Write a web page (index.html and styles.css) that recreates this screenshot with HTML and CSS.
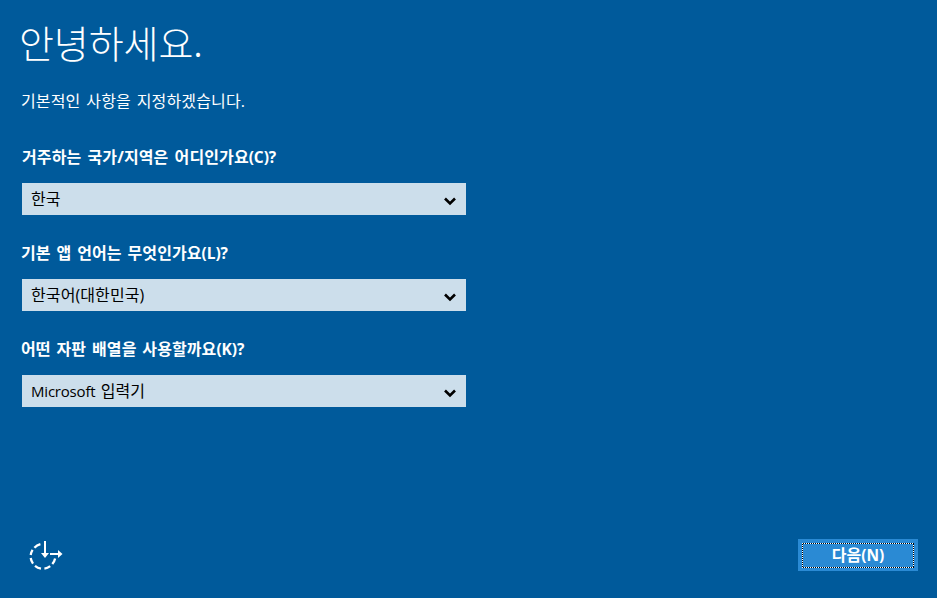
FILE: index.html
```html
<!DOCTYPE html>
<html lang="ko">
<head>
<meta charset="utf-8">
<title>안녕하세요.</title>
<link rel="stylesheet" href="styles.css">
</head>
<body>
<main class="setup">
  <h1 class="title">안녕하세요.</h1>
  <p class="intro">기본적인 사항을 지정하겠습니다.</p>
  <form class="fields">
    <div class="field">
      <label class="label country">거주하는 국가/지역은 어디인가요<span class="key">(C)?</span></label>
      <div class="select"><span class="value">한국</span><svg class="chevron" viewBox="0 0 12 9"><path d="M1 1.5 6 6.5 11 1.5"/></svg></div>
    </div>
    <div class="field">
      <label class="label language">기본 앱 언어는 무엇인가요<span class="key">(L)?</span></label>
      <div class="select"><span class="value">한국어(대한민국)</span><svg class="chevron" viewBox="0 0 12 9"><path d="M1 1.5 6 6.5 11 1.5"/></svg></div>
    </div>
    <div class="field">
      <label class="label keyboard">어떤 자판 배열을 사용할까요<span class="key">(K)?</span></label>
      <div class="select"><span class="value"><span class="latin">Microsoft</span> 입력기</span><svg class="chevron" viewBox="0 0 12 9"><path d="M1 1.5 6 6.5 11 1.5"/></svg></div>
    </div>
  </form>
  <footer class="footer">
    <svg class="ease" viewBox="0 0 34 30">
      <path class="ring" d="M11.4 3.1A12.6 12.6 0 0 0 5.4 6.8M3.6 8.9A12.6 12.6 0 0 0 1.7 14M1.7 17A12.6 12.6 0 0 0 4 22.6M6 24.8A12.6 12.6 0 0 0 12 27.6M15.4 27.7A12.6 12.6 0 0 0 21.2 25.2M23.3 23A12.6 12.6 0 0 0 26.1 17.4"/>
      <path class="arrow" d="M16 0V13M21 13H30"/>
      <path class="head" d="M12 12H20L16 17ZM29 9L33.5 13L29 17Z"/>
    </svg>
    <button class="next" type="button"><span class="focus">다음<span class="key">(N)</span></span></button>
  </footer>
</main>
</body>
</html>
```

FILE: styles.css
```css
* { box-sizing: border-box; }
body {
  margin: 0;
  background: #005a9b;
  color: #fff;
  font-family: "Open Sans", "Noto Sans CJK KR", sans-serif;
  font-size: 16px;
}
.setup {
  display: flex;
  flex-direction: column;
  height: 598px;
  padding: 16px 19px 27px 22px;
}
.title {
  margin: 0 0 0 -3px;
  height: 52px;
  line-height: 52px;
  font-family: "Noto Sans CJK KR", sans-serif;
  font-size: 38px;
  font-weight: 300;
  letter-spacing: -0.1px;
  white-space: nowrap;
}
.intro {
  margin: 21px 0 0 -1px;
  height: 24px;
  line-height: 24px;
  white-space: nowrap;
  letter-spacing: 0.15px;
  word-spacing: 1.5px;
}
.fields { margin-top: 32px; }
.field { height: 96px; }
.label {
  display: block;
  height: 38px;
  line-height: 24px;
  font-weight: 700;
  white-space: nowrap;
  word-spacing: 2px;
  letter-spacing: 0.1px;
}
.language, .keyboard {
  margin-left: -1px;
  word-spacing: 1.6px;
}
.key { font-size: 15.5px; }
.label .key { letter-spacing: -0.1px; }
.latin { font-size: 15px; letter-spacing: -0.2px; }
.select {
  display: flex;
  align-items: center;
  justify-content: space-between;
  width: 444px;
  height: 32px;
  padding: 0 10px 0 9px;
  background: #ccdeeb;
  color: #000;
}
.value { line-height: 32px; white-space: nowrap; word-spacing: 1px; letter-spacing: 0.1px; }
.chevron { width: 12px; height: 9px; margin-top: 4px; }
.chevron path { fill: none; stroke: #000; stroke-width: 2.6; }
.footer {
  display: flex;
  align-items: flex-end;
  justify-content: space-between;
  margin-top: auto;
}
.ease { width: 34px; height: 30px; margin-left: 7px; }
.ring, .arrow { fill: none; stroke: #fff; stroke-width: 2; }
.ring { stroke-width: 2.3; }
.head { fill: #fff; }
.next {
  width: 120px;
  height: 32px;
  padding: 4px;
  border: 0;
  background: #2a8ad4;
  color: #fff;
  font: 700 16px "Open Sans", "Noto Sans CJK KR", sans-serif;
}
.focus {
  display: block;
  height: 25px;
  line-height: 25px;
  background:
    repeating-linear-gradient(90deg, #fff 0 1px, #000 1px 2px) top / 100% 1px no-repeat,
    repeating-linear-gradient(90deg, #fff 0 1px, #000 1px 2px) bottom / 100% 1px no-repeat,
    repeating-linear-gradient(#fff 0 1px, #000 1px 2px) left / 1px 100% no-repeat,
    repeating-linear-gradient(#fff 0 1px, #000 1px 2px) right / 1px 100% no-repeat;
}
```
